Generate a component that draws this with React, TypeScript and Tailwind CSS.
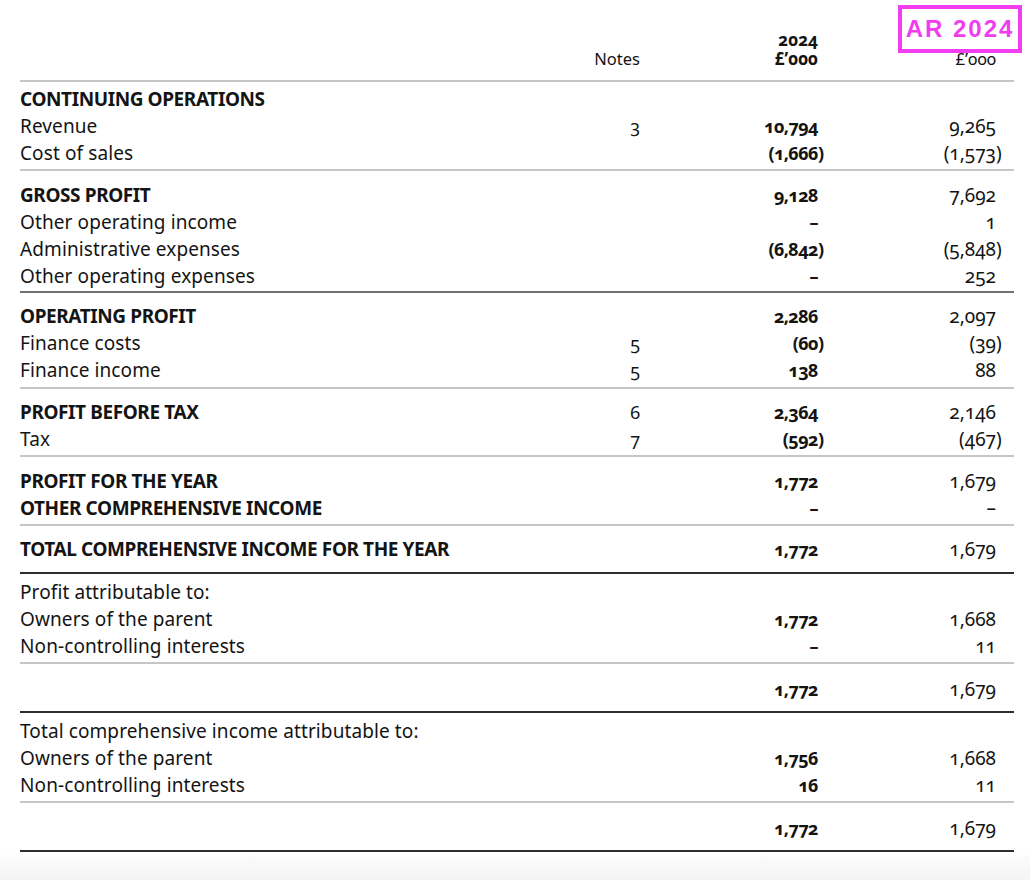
import React from "react";

type Row = { label?: string; bold?: boolean; note?: string; a?: string; b?: string };
type Section = { pt: string; pb: string; border: string; rows: Row[]; last?: boolean };

const LIGHT = "border-[#c6c6c6]";
const MID = "border-[#707070]";
const DARK = "border-[#2e2e2e]";

const sections: Section[] = [
  {
    pt: "pt-[4px]", pb: "pb-[2px]", border: LIGHT,
    rows: [
      { label: "CONTINUING OPERATIONS", bold: true },
      { label: "Revenue", note: "3", a: "10,794", b: "9,265" },
      { label: "Cost of sales", a: "(1,666)", b: "(1,573)" },
    ],
  },
  {
    pt: "pt-[11px]", pb: "pb-[1px]", border: LIGHT,
    rows: [
      { label: "GROSS PROFIT", bold: true, a: "9,128", b: "7,692" },
      { label: "Other operating income", a: "–", b: "1" },
      { label: "Administrative expenses", a: "(6,842)", b: "(5,848)" },
      { label: "Other operating expenses", a: "–", b: "252" },
    ],
  },
  {
    pt: "pt-[10px]", pb: "pb-[3px]", border: MID,
    rows: [
      { label: "OPERATING PROFIT", bold: true, a: "2,286", b: "2,097" },
      { label: "Finance costs", note: "5", a: "(60)", b: "(39)" },
      { label: "Finance income", note: "5", a: "138", b: "88" },
    ],
  },
  {
    pt: "pt-[10px]", pb: "pb-[2px]", border: LIGHT,
    rows: [
      { label: "PROFIT BEFORE TAX", bold: true, note: "6", a: "2,364", b: "2,146" },
      { label: "Tax", note: "7", a: "(592)", b: "(467)" },
    ],
  },
  {
    pt: "pt-[11px]", pb: "pb-[2px]", border: LIGHT,
    rows: [
      { label: "PROFIT FOR THE YEAR", bold: true, a: "1,772", b: "1,679" },
      { label: "OTHER COMPREHENSIVE INCOME", bold: true, a: "–", b: "–" },
    ],
  },
  {
    pt: "pt-[10px]", pb: "pb-[9px]", border: LIGHT,
    rows: [{ label: "TOTAL COMPREHENSIVE INCOME FOR THE YEAR", bold: true, a: "1,772", b: "1,679" }],
  },
  {
    pt: "pt-[5px]", pb: "pb-[2px]", border: DARK,
    rows: [
      { label: "Profit attributable to:" },
      { label: "Owners of the parent", a: "1,772", b: "1,668" },
      { label: "Non-controlling interests", a: "–", b: "11" },
    ],
  },
  {
    pt: "pt-[12px]", pb: "pb-[8px]", border: LIGHT,
    rows: [{ a: "1,772", b: "1,679" }],
  },
  {
    pt: "pt-[5px]", pb: "pb-[2px]", border: DARK,
    rows: [
      { label: "Total comprehensive income attributable to:" },
      { label: "Owners of the parent", a: "1,756", b: "1,668" },
      { label: "Non-controlling interests", a: "16", b: "11" },
    ],
  },
  {
    pt: "pt-[12px]", pb: "pb-[8px]", border: LIGHT, last: true,
    rows: [{ a: "1,772", b: "1,679" }],
  },
];

function Num({ v }: { v?: string }) {
  if (!v) return null;
  if (v.startsWith("(")) {
    return (
      <>
        {v.slice(0, -1)}
        <span className="inline-block w-0">)</span>
      </>
    );
  }
  return <>{v}</>;
}

function TableRow({ r }: { r: Row }) {
  return (
    <div className="flex h-[27px] items-center leading-[27px]">
      <div
        className={`flex-1 whitespace-nowrap text-[19px] ${r.bold ? "font-bold tracking-[-0.4px]" : "tracking-[0.1px]"}`}
      >
        {r.label}
      </div>
      <div className="w-[100px] text-right text-[18px]">{r.note}</div>
      <div className="w-[178px] text-right text-[18px] font-bold tracking-[-0.6px]">
        <Num v={r.a} />
      </div>
      <div className="w-[178px] text-right text-[19px]">
        <Num v={r.b} />
      </div>
      <div className="w-[18px]" />
    </div>
  );
}

export default function App() {
  return (
    <div className="relative flex h-[880px] w-[1030px] flex-col bg-white text-[#141414]">
      <div
        className="ml-[20px] w-[994px] text-[17px] oldstyle-nums"
        style={{ fontFamily: '"Noto Sans", "Open Sans", sans-serif' }}
      >
        <div className="flex h-[80px] flex-col justify-end pb-[12px]">
          <div className="flex h-[19px] items-center leading-[19px]">
            <div className="flex-1" />
            <div className="w-[100px]" />
            <div className="w-[178px] text-right font-bold">2024</div>
            <div className="w-[178px]" />
            <div className="w-[18px]" />
          </div>
          <div className="flex h-[19px] items-center leading-[19px]">
            <div className="flex-1" />
            <div className="w-[100px] text-right text-[16.5px]">Notes</div>
            <div className="w-[178px] text-right font-bold">£’000</div>
            <div className="w-[178px] text-right">£’000</div>
            <div className="w-[18px]" />
          </div>
        </div>
        {sections.map((s, i) => (
          <div
            key={i}
            className={`border-t-2 ${s.border} ${s.pt} ${s.pb} ${s.last ? "border-b-2 border-b-[#2e2e2e]" : ""}`}
          >
            {s.rows.map((r, j) => (
              <TableRow key={j} r={r} />
            ))}
          </div>
        ))}
      </div>
      <div className="mt-[3px] flex-1 bg-gradient-to-b from-[#fcfcfc] to-[#f4f4f4]" />
      <div
        className="absolute left-[898px] top-[5px] flex h-[48px] w-[124px] items-center justify-center border-[4px] border-[#f23cf0] bg-white text-[24px] font-bold leading-none tracking-[2px] text-[#f23cf0]"
        style={{ fontFamily: '"Liberation Sans", Arial, sans-serif' }}
      >
        AR 2024
      </div>
    </div>
  );
}
